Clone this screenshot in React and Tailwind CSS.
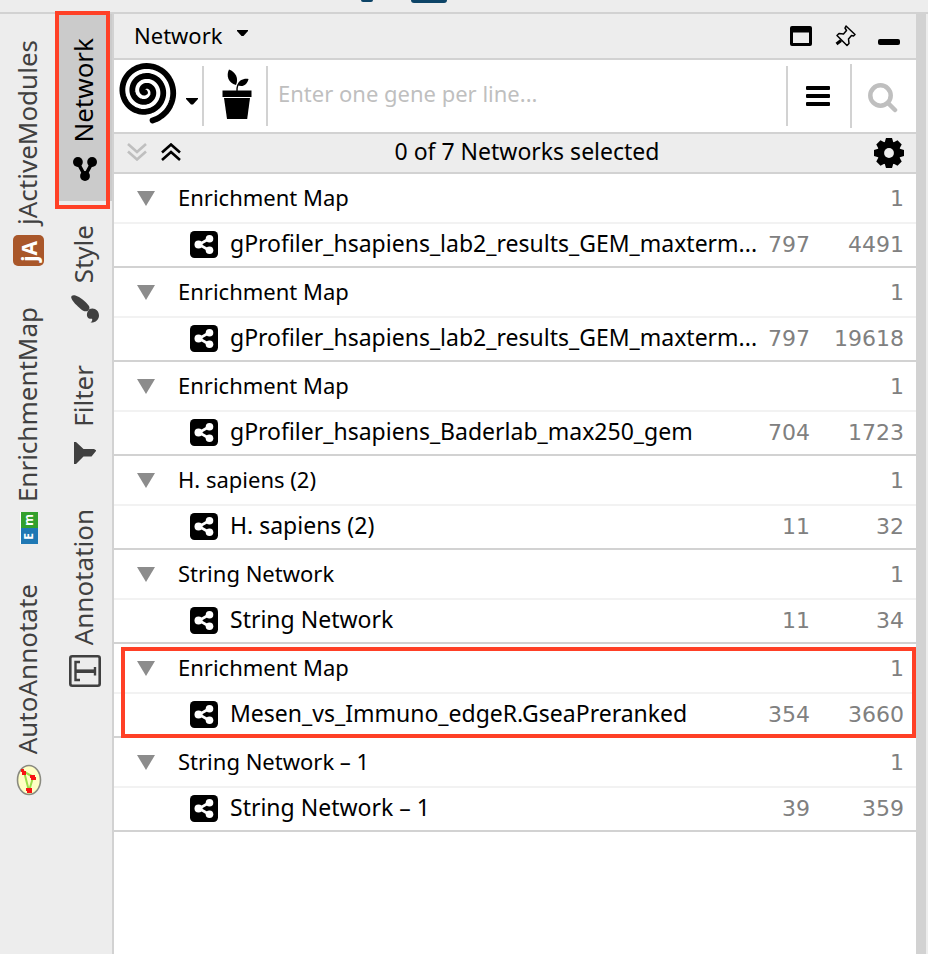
import React from "react";

const networks = [
  { group: "Enrichment Map", name: "gProfiler_hsapiens_lab2_results_GEM_maxterm...", nodes: 797, edges: 4491 },
  { group: "Enrichment Map", name: "gProfiler_hsapiens_lab2_results_GEM_maxterm...", nodes: 797, edges: 19618 },
  { group: "Enrichment Map", name: "gProfiler_hsapiens_Baderlab_max250_gem", nodes: 704, edges: 1723 },
  { group: "H. sapiens (2)", name: "H. sapiens (2)", nodes: 11, edges: 32 },
  { group: "String Network", name: "String Network", nodes: 11, edges: 34 },
  { group: "Enrichment Map", name: "Mesen_vs_Immuno_edgeR.GseaPreranked", nodes: 354, edges: 3660, marked: true },
  { group: "String Network – 1", name: "String Network – 1", nodes: 39, edges: 359 },
];

/* Archimedean spiral that grows clockwise by `pitch` per turn. */
function spiralPath(cx, cy, rEnd, pitch, endDeg) {
  const turns = (rEnd - 1) / pitch;
  const steps = 160;
  const pts = [];
  for (let i = 0; i <= steps; i++) {
    const back = turns * (1 - i / steps);
    const a = (endDeg * Math.PI) / 180 - back * 2 * Math.PI;
    const r = rEnd - back * pitch;
    pts.push(`${(cx + r * Math.cos(a)).toFixed(2)} ${(cy + r * Math.sin(a)).toFixed(2)}`);
  }
  return "M" + pts.join("L");
}

const SpiralIcon = () => (
  <svg width="60" height="66" viewBox="0 0 60 66" className="shrink-0" aria-hidden="true">
    <path d={spiralPath(27.3, 28.4, 30, 10, 76)} fill="none" stroke="#000" strokeWidth="5.8" strokeLinecap="round" strokeLinejoin="round" />
  </svg>
);

const PlantIcon = () => (
  <svg width="30" height="51" viewBox="0 0 30 51" className="block" aria-hidden="true">
    <path d="M0.5 21.500h29v6.500H0.500z" />
    <path d="M2 29h26l-2.800 21H5z" />
    <path d="M15 22c0-5 .5-7 4-8.500" fill="none" stroke="#000" strokeWidth="1.4" />
    <path d="M7 0.500c-3 6-1 13.500 7 15.500C17 9 13.500 3 7 .5z" />
    <path d="M26.500 10c-5-.8-10 1.500-11 6 4.500 2.500 9.500.5 11-6z" />
  </svg>
);

const ShareIcon = () => (
  <svg width="28" height="28" viewBox="0 0 28 28" className="shrink-0" aria-hidden="true">
    <rect width="28" height="27" rx="4.500" />
    <path d="M19.500 7.500L9 13.500l10.500 6" fill="none" stroke="#fff" strokeWidth="2.600" />
    <circle cx="8.500" cy="13.500" r="4" fill="#fff" />
    <circle cx="19.500" cy="7.800" r="3.800" fill="#fff" />
    <circle cx="19.500" cy="19.200" r="3.800" fill="#fff" />
  </svg>
);

const GearIcon = () => (
  <svg width="30" height="30" viewBox="-15 -15 30 30" aria-hidden="true">
    {[0, 45, 90, 135].map((a) => (
      <path key={a} d="M-4.500 -10L-3 -15H3L4.500 -10V10L3 15H-3L-4.500 10z" transform={`rotate(${a})`} />
    ))}
    <circle r="11.500" />
    <circle r="4.900" fill="#ededed" />
  </svg>
);

const NetworkTabIcon = () => (
  <svg width="24" height="24" viewBox="0 0 24 24" aria-hidden="true">
    <path d="M4.500 5l7.500 14 7.500-14" fill="none" stroke="#000" strokeWidth="3.600" />
    <circle cx="4.900" cy="5" r="4.900" />
    <circle cx="19.100" cy="5" r="4.900" />
    <circle cx="12" cy="19" r="4.900" />
  </svg>
);

const BrushIcon = () => (
  <svg width="28" height="28" viewBox="0 0 28 28" fill="#404040" aria-hidden="true">
    <path d="M.2 2.500C0 .5 2-.2 4.500.5 9 2 14.500 6 18 11c1 2 .2 4-1.300 4.900-2 1-4.700.3-7-1.900C6.500 11 1 6.500.2 2.500z" />
    <path d="M18.500 14c5-2 9.500 1.500 9.500 6.500 0 4.500-4 7.500-8.500 7 1.500-1.200 2.200-2.200 1.500-3.800-4 .5-5.500-2.200-5-5 .3-1.500.7-2.500 2.500-4.700z" />
  </svg>
);

const FunnelIcon = () => (
  <svg width="22" height="22" viewBox="0 0 22 22" fill="#404040" aria-hidden="true">
    <path d="M0 0h2l7.500 7H20l2 1.200v.8l-4.500 5.500h-8L2 22H0z" />
  </svg>
);

const TextBoxIcon = () => (
  <svg width="32" height="32" viewBox="0 0 32 32" fill="none" stroke="#404040" aria-hidden="true">
    <rect x="1.300" y="1.300" width="29.400" height="29.400" rx="2" strokeWidth="2.600" />
    <path d="M11 7H6.500v18H11M26 12v8.500" strokeWidth="2.400" />
    <path d="M6.500 16.200H26" strokeWidth="3.600" />
  </svg>
);

const JaIcon = () => (
  <span className="flex size-[31px] items-center justify-center rounded-[5px] bg-[#a9572a]" aria-hidden="true">
    <span className="rotate-180 text-[21px] leading-[24px] font-bold text-white [writing-mode:vertical-rl]">jA</span>
  </span>
);

const EmIcon = () => (
  <span className="flex flex-col border-l border-white text-[12px] leading-4 font-bold text-white" aria-hidden="true">
    <span className="flex h-4 w-[17px] items-center justify-center bg-[#33a02c]">
      <span className="rotate-180 [writing-mode:vertical-rl]">m</span>
    </span>
    <span className="flex h-4 w-[17px] items-center justify-center bg-[#1f78b4]">
      <span className="rotate-180 [writing-mode:vertical-rl]">E</span>
    </span>
  </span>
);

const AnnotateIcon = () => (
  <svg width="26" height="32" viewBox="0 0 26 32" aria-hidden="true">
    <ellipse cx="13" cy="16" rx="11.500" ry="14.500" fill="#ffffc4" stroke="#8a8a80" strokeWidth="1.600" />
    <path d="M8 7.500L13 27 17 13.500zM8 7.500l9 5" fill="none" stroke="#9ade4a" strokeWidth="2" />
    <path d="M5 5h3v2h2v4H6V8H5zM14 11h5v2h1v3h-5v-2h-1zM10 24h6v5h-5v-2h-1z" fill="#f81414" />
  </svg>
);

function SideTab({ label, icon, active }) {
  return (
    <button
      type="button"
      className={
        active
          ? "relative flex w-full flex-col items-center gap-2.5 bg-[#cbcbcb] pt-6 pb-4 text-black"
          : "flex w-full flex-col items-center gap-2.5 pt-6 pb-4 text-[#404040]"
      }
    >
      <span className="rotate-180 pl-1 text-[26px] leading-8 whitespace-nowrap [writing-mode:vertical-rl]">{label}</span>
      <span className="flex size-8 items-center justify-center">{icon}</span>
      {active && <span className="pointer-events-none absolute -top-[3px] right-[2px] -bottom-2 -left-[2px] z-10 border-4 border-[#ff4026]" />}
    </button>
  );
}

const NUM = "text-right font-['DejaVu_Sans',sans-serif] text-[#808080]";

function NetworkGroup({ item }) {
  return (
    <tbody className="relative">
      <tr className="h-[50px]">
        <td className="border-b-2 border-[#f2f2f2] p-0" colSpan={2}>
          <div className="flex items-center gap-[23px]">
            <button type="button" aria-label={`Collapse ${item.group}`} className="ml-[23px] flex">
              <svg width="18" height="15" viewBox="0 0 18 15" fill="#8c8c8c" aria-hidden="true">
                <path d="M0 0h18L9 15z" />
              </svg>
            </button>
            <span className="pb-0.5 whitespace-nowrap">{item.group}</span>
          </div>
          {item.marked && (
            <div className="pointer-events-none absolute top-[3px] right-0 bottom-0 left-[7px] z-10 border-4 border-[#ff4026]" />
          )}
        </td>
        <td className={`border-b-2 border-[#f2f2f2] p-0 pt-0.5 pr-3 ${NUM}`}>1</td>
      </tr>
      <tr className="h-11">
        <td className="border-b-2 border-[#d2d2d2] p-0">
          <div className="flex items-center gap-3 pl-[76px]">
            <ShareIcon />
            <span className="pb-1 text-[23px] whitespace-nowrap">{item.name}</span>
          </div>
        </td>
        <td className={`border-b-2 border-[#d2d2d2] p-0 ${NUM}`}>{item.nodes}</td>
        <td className={`border-b-2 border-[#d2d2d2] p-0 pr-3 ${NUM}`}>{item.edges}</td>
      </tr>
    </tbody>
  );
}

export default function App() {
  return (
    <div className="flex min-h-screen flex-col overflow-hidden bg-[#ededed] font-['Noto_Sans',sans-serif] text-[22px] leading-[30px] text-black">
      <div className="flex h-3.5 shrink-0 items-start gap-[38px] border-b-2 border-[#d2d2d2] pl-[361px]">
        <span className="h-0.5 w-3 rounded-b-full bg-[#0d4467]" />
        <span className="h-[3px] w-9 rounded-b bg-[#0d4467]" />
      </div>

      <div className="flex flex-1">
        <nav className="flex shrink-0" aria-label="Panels">
          <div className="flex w-[57px] flex-col pt-0.5">
            <SideTab label="jActiveModules" icon={<JaIcon />} />
            <SideTab label="EnrichmentMap" icon={<EmIcon />} />
            <SideTab label="AutoAnnotate" icon={<AnnotateIcon />} />
          </div>
          <div className="flex w-[55px] flex-col">
            <SideTab label="Network" icon={<NetworkTabIcon />} active />
            <SideTab label="Style" icon={<BrushIcon />} />
            <SideTab label="Filter" icon={<FunnelIcon />} />
            <SideTab label="Annotation" icon={<TextBoxIcon />} />
          </div>
        </nav>

        <main className="flex min-w-0 flex-1 flex-col border-l-2 border-[#d2d2d2] bg-white">
          <header className="flex h-[46px] items-center border-b-2 border-[#d2d2d2] bg-[#ededed] pr-4 pl-5">
            <button type="button" className="flex items-center gap-3.5 pb-0.5">
              Network
              <svg width="11" height="6" viewBox="0 0 11 6" className="mb-1" aria-hidden="true">
                <path d="M0 0h11v1L6.500 6h-2L0 1z" />
              </svg>
            </button>
            <div className="ml-auto flex items-center gap-[22px]">
              <button type="button" aria-label="Float">
                <svg width="22" height="20" viewBox="0 0 22 20" className="block" aria-hidden="true">
                  <path fillRule="evenodd" d="M2 0h18a2 2 0 0 1 2 2v16a2 2 0 0 1-2 2H2a2 2 0 0 1-2-2V2a2 2 0 0 1 2-2zM3 6.500v10.500h16V6.500z" />
                </svg>
              </button>
              <button type="button" aria-label="Pin">
                <svg width="22" height="22" viewBox="0 0 22 22" className="block" fill="none" stroke="#000" strokeLinejoin="round" aria-hidden="true">
                  <path d="M12 1l9 8.500-1.500 1.500-2-.5-3 3.500.5 4.500-2 2L3 10.500 5 8.500l4.500.5 3-3.500L11 3z" strokeWidth="1.500" />
                  <path d="M7 15.500L2.500 19" strokeWidth="3" />
                </svg>
              </button>
              <button type="button" aria-label="Minimize" className="flex h-[18px] items-end">
                <span className="h-1.5 w-[22px] rounded-[2px] bg-black" />
              </button>
            </div>
          </header>

          <div className="flex h-[74px] items-center border-b-2 border-[#d2d2d2]">
            <button type="button" aria-label="Search provider" className="flex w-[88px] items-center gap-2 pl-1">
              <SpiralIcon />
              <svg width="12" height="7" viewBox="0 0 12 7" className="mt-2.5 shrink-0" aria-hidden="true">
                <path d="M0 0h12v1L7 6.500H5L0 1z" />
              </svg>
            </button>
            <div className="flex h-[60px] w-[66px] items-center justify-center border-x-2 border-[#d2d2d2]">
              <button type="button" aria-label="Organism" className="pb-1 pl-1">
                <PlantIcon />
              </button>
            </div>
            <input
              type="text"
              aria-label="Enter one gene per line"
              placeholder="Enter one gene per line..."
              className="min-w-0 flex-1 bg-transparent pb-1.5 pl-2.5 outline-none placeholder:text-[#bfbfbf]"
            />
            <button type="button" aria-label="Options" className="flex h-[60px] w-16 items-center justify-center border-l-2 border-[#d2d2d2] pr-0.5">
              <svg width="24" height="20" viewBox="0 0 24 20" aria-hidden="true">
                <rect width="24" height="4" rx="1" />
                <rect y="8" width="24" height="4" rx="1" />
                <rect y="16" width="24" height="4" rx="1" />
              </svg>
            </button>
            <button type="button" aria-label="Search" className="flex h-16 w-[66px] items-center justify-center border-l-2 border-[#d2d2d2] pr-0.5">
              <svg width="30" height="30" viewBox="0 0 30 30" className="mt-1" fill="none" stroke="#bfbfbf" aria-hidden="true">
                <circle cx="12.500" cy="12.500" r="10.200" strokeWidth="4.500" />
                <path d="M20.500 20.500l6.500 6.500" strokeWidth="4.500" strokeLinecap="round" />
              </svg>
            </button>
          </div>

          <div className="flex h-10 items-center border-b-2 border-[#d2d2d2] bg-[#ededed]">
            <div className="flex w-20 items-center gap-[14px] pb-0.5 pl-[13px]">
              <button type="button" aria-label="Expand all">
                <svg width="20" height="18" viewBox="0 0 20 18" className="block" fill="none" stroke="#bfbfbf" strokeWidth="2.600" aria-hidden="true">
                  <path d="M1 1l9 8 9-8M1 8.500l9 8 9-8" />
                </svg>
              </button>
              <button type="button" aria-label="Collapse all">
                <svg width="20" height="18" viewBox="0 0 20 18" className="block" fill="none" stroke="#000" strokeWidth="2.600" aria-hidden="true">
                  <path d="M1 9.500l9-8 9 8M1 17l9-8 9 8" />
                </svg>
              </button>
            </div>
            <p className="flex-1 pb-1 text-center text-[23px]">0 of 7 Networks selected</p>
            <button type="button" aria-label="Network settings" className="flex w-14 items-center justify-center pl-0.5">
              <GearIcon />
            </button>
          </div>

          <table className="w-full table-fixed border-separate border-spacing-0">
            <colgroup>
              <col />
              <col className="w-[50px]" />
              <col className="w-[106px]" />
            </colgroup>
            {networks.map((item, i) => (
              <NetworkGroup key={i} item={item} />
            ))}
          </table>
        </main>
        <div className="w-3 shrink-0 border-l-[10px] border-[#d2d2d2]" />
      </div>
    </div>
  );
}
